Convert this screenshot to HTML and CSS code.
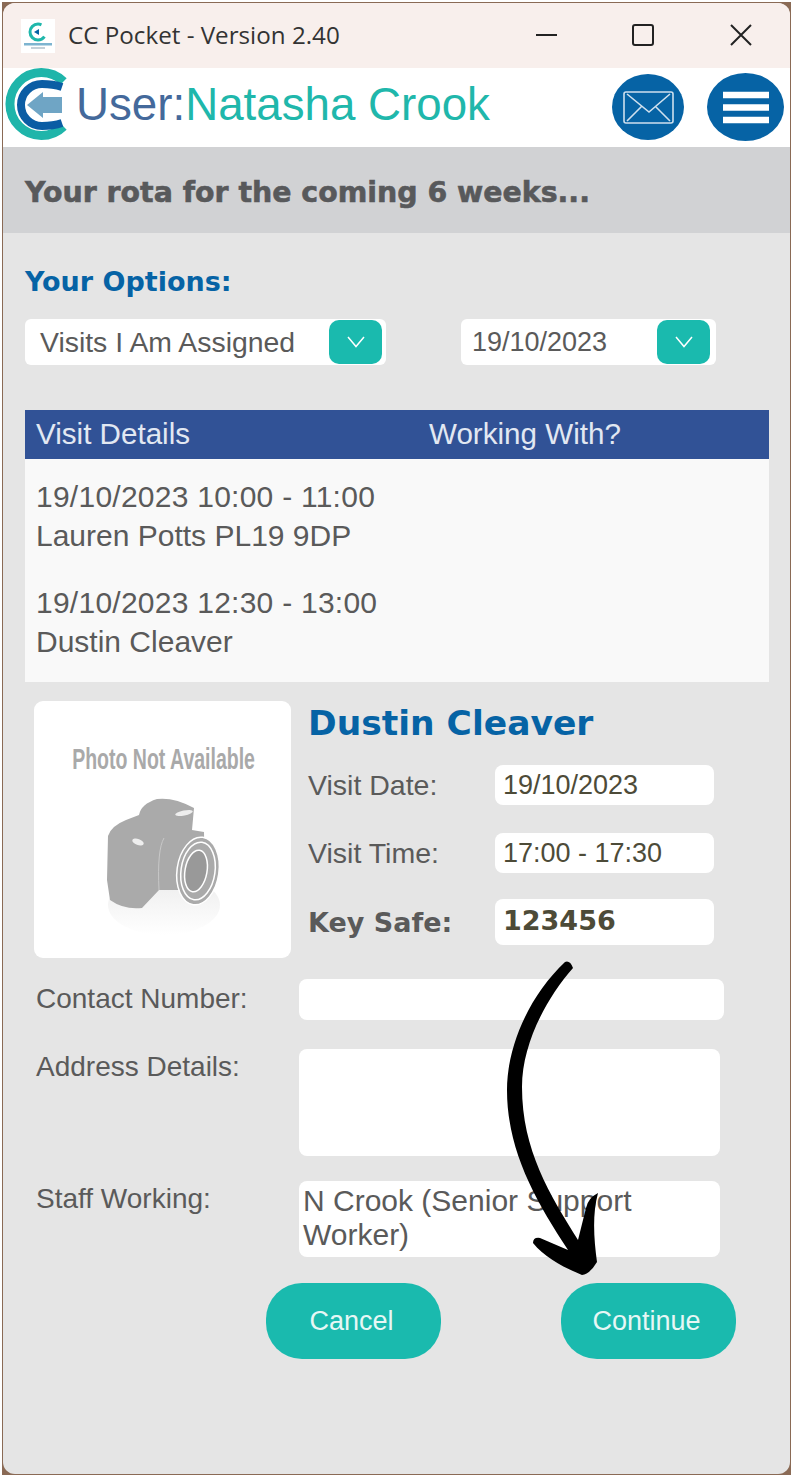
FILE: index.html
```html
<!doctype html>
<html>
<head>
    <meta charset="utf-8">
    <title>CC Pocket</title>
    <link rel="stylesheet" href="styles.css">
</head>
<body>
<div class="frame">
<div class="window">
    <div class="titlebar">
        <svg class="app-icon" width="34" height="34" viewBox="0 0 34 34">
            <rect width="34" height="34" fill="#fff"/>
            <circle cx="17" cy="13" r="8" fill="none" stroke="#20b7ab" stroke-width="3" stroke-dasharray="36 14" stroke-dashoffset="-5"/>
            <path d="M13 13l5-3v6z" fill="#0663a5"/>
            <rect x="3" y="24" width="28" height="2.5" fill="#7db4d0"/>
            <rect x="10" y="28" width="14" height="2" fill="#c4d0d8"/>
        </svg>
        <span class="app-title">CC Pocket - Version 2.40</span>
        <div class="win-controls">
            <svg width="24" height="24" viewBox="0 0 24 24"><path d="M3 12h21" stroke="#222" stroke-width="2"/></svg>
            <svg width="24" height="24" viewBox="0 0 24 24"><rect x="2" y="2" width="20" height="20" rx="2" fill="none" stroke="#222" stroke-width="2"/></svg>
            <svg width="24" height="24" viewBox="0 0 24 24"><path d="M2 2l20 20M22 2L2 22" stroke="#222" stroke-width="2"/></svg>
        </div>
    </div>

    <div class="header">
        <svg class="logo" width="66" height="74" viewBox="0 0 66 74">
            <path d="M58.500 14.500A31.500 31.500 0 1 0 58.500 59.500" fill="none" stroke="#1fb5aa" stroke-width="9"/>
            <path d="M57 20Q48 17 37 17A21 21 0 0 0 37 59Q48 59 57 56" fill="none" stroke="#0b5da4" stroke-width="8"/>
            <path d="M22 38L38 25v5h19v16H38v5z" fill="#6fa5c5"/>
        </svg>
        <div class="user-name"><span class="user-label">User:</span>Natasha Crook</div>
        <svg class="mail-btn" width="72" height="66" viewBox="0 0 72 66">
            <ellipse cx="36" cy="33" rx="36" ry="33" fill="#0663a5"/>
            <rect x="12" y="18" width="49" height="31" rx="2" fill="none" stroke="#cfe0ee" stroke-width="1.6"/>
            <path d="M15 20l22 18 21-18M15 47l15-15M58 47L43 32" fill="none" stroke="#cfe0ee" stroke-width="1.6"/>
        </svg>
        <svg class="menu-btn" width="77" height="68" viewBox="0 0 77 68">
            <ellipse cx="38.5" cy="34" rx="38.5" ry="34" fill="#0663a5"/>
            <path d="M16 22h46M16 34.500h46M16 47h46" stroke="#fff" stroke-width="6.500"/>
        </svg>
    </div>

    <div class="band">Your rota for the coming 6 weeks...</div>

    <div class="content">
        <h2 class="options-title">Your Options:</h2>
        <div class="options">
            <div class="select select-type">
                <span>Visits I Am Assigned</span>
                <div class="select-btn"><svg width="18" height="12" viewBox="0 0 18 12"><path d="M1 1l8 9.500L17 1" fill="none" stroke="#fff" stroke-width="1.500"/></svg></div>
            </div>
            <div class="select select-date">
                <span>19/10/2023</span>
                <div class="select-btn"><svg width="18" height="12" viewBox="0 0 18 12"><path d="M1 1l8 9.500L17 1" fill="none" stroke="#fff" stroke-width="1.500"/></svg></div>
            </div>
        </div>

        <div class="table-head">
            <div class="col-details">Visit Details</div>
            <div>Working With?</div>
        </div>
        <div class="table-body">
            <div class="visit"><span class="visit-time">19/10/2023 10:00 - 11:00</span><br>Lauren Potts PL19 9DP</div>
            <div class="visit"><span class="visit-time">19/10/2023 12:30 - 13:00</span><br>Dustin Cleaver</div>
        </div>

        <div class="detail">
            <div class="photo">
                <div class="photo-text">Photo Not Available</div>
                <svg class="camera" width="130" height="150" viewBox="100 790 130 150">
                    <defs>
                        <linearGradient id="shine" x1="0" y1="0" x2="0" y2="1">
                            <stop offset="0" stop-color="#ececec"/>
                            <stop offset="1" stop-color="#fff"/>
                        </linearGradient>
                    </defs>
                    <ellipse cx="165" cy="905" rx="56" ry="30" fill="url(#shine)"/>
                    <path d="M109 836Q112 826 127 820L140 815Q142 804 158 799Q175 797 195 808L193 830L205 832L206 890L160 890L143 908Q125 910 111 900L108 880Z" fill="#aaa"/>
                    <ellipse cx="199" cy="871" rx="21" ry="34" transform="rotate(8 199 871)" fill="#aaa" stroke="#fff" stroke-width="1.500"/>
                    <ellipse cx="199" cy="871" rx="17" ry="29" transform="rotate(8 199 871)" fill="none" stroke="#fff" stroke-width="1.500"/>
                    <ellipse cx="197" cy="871" rx="11" ry="21" transform="rotate(10 197 871)" fill="#999" stroke="#fff" stroke-width="1.500"/>
                    <ellipse cx="185" cy="813" rx="9" ry="2.500" transform="rotate(-12 185 813)" fill="#eee"/>
                    <ellipse cx="139" cy="842" rx="6" ry="3" transform="rotate(20 139 842)" fill="#eee"/>
                    <path d="M165 838Q158 850 160 890" fill="none" stroke="#c8c8c8" stroke-width="1"/>
                </svg>
            </div>
            <div class="summary">
                <h2 class="client-name">Dustin Cleaver</h2>
                <div class="summary-row row-date">
                    <div class="summary-label">Visit Date:</div>
                    <div class="field field-short">19/10/2023</div>
                </div>
                <div class="summary-row row-time">
                    <div class="summary-label">Visit Time:</div>
                    <div class="field field-short">17:00 - 17:30</div>
                </div>
                <div class="summary-row row-key">
                    <div class="summary-label key-label">Key Safe:</div>
                    <div class="field field-key">123456</div>
                </div>
            </div>
        </div>

        <div class="form-row row-contact">
            <div class="form-label">Contact Number:</div>
            <div class="field field-contact"></div>
        </div>
        <div class="form-row row-address">
            <div class="form-label">Address Details:</div>
            <div class="field field-address"></div>
        </div>
        <div class="form-row row-staff">
            <div class="form-label">Staff Working:</div>
            <div class="field field-staff">N Crook (Senior Support Worker)</div>
        </div>

        <div class="buttons">
            <div class="btn">Cancel</div>
            <div class="btn">Continue</div>
        </div>
    </div>

    <svg class="arrow" width="110" height="330" viewBox="500 955 110 330">
        <path d="M565 962C530 995 507 1045 507 1090C507 1150 535 1200 568 1250L540 1238Q533 1237 533 1243C545 1258 565 1268 582 1275Q590 1274 597 1262C594 1240 592 1215 598 1193Q588 1198 586 1208L578 1240C550 1195 522 1150 522 1087C522 1045 545 1000 573 968Q570 960 565 962Z" fill="#000"/>
    </svg>
</div>
</div>
</body>
</html>
```

FILE: styles.css
```css
* {
    box-sizing: border-box;
}
html, body {
    margin: 0;
    height: 100%;
}
body {
    background: #fff;
    padding: 2px;
    font: 27px "Liberation Sans", Arial, sans-serif;
    color: #5a5a5a;
}
.frame {
    background: #8a6a55;
    padding: 1px;
}
.window {
    position: relative;
    height: 1471px;
    background: #e5e5e5;
    border-radius: 12px;
    overflow: hidden;
}
.titlebar {
    height: 65px;
    background: #f8efec;
    display: flex;
    align-items: center;
    padding-left: 18px;
}
.app-title {
    font: 24.2px "Open Sans", sans-serif;
    color: #333;
    margin-left: 13px;
    padding-bottom: 2px;
}
.win-controls {
    margin-left: auto;
    margin-top: -2px;
    display: flex;
    gap: 74px;
    padding-right: 37px;
}
.header {
    height: 79px;
    background: #fff;
    display: flex;
    align-items: center;
    padding-left: 2px;
}
.logo {
    flex: none;
    margin-top: -7px;
}
.user-name {
    font-size: 45.7px;
    color: #20b7ab;
    margin-left: 5px;
    margin-top: -6px;
}
.user-label {
    color: #44699b;
}
.mail-btn {
    margin-left: auto;
    margin-top: -1px;
}
.menu-btn {
    margin-left: 23px;
    margin-right: 6px;
    margin-top: -1px;
}
.band {
    height: 86px;
    background: #d1d2d4;
    padding: 28px 0 0 22px;
    font: bold 28.4px/36px "DejaVu Sans", sans-serif;
    -webkit-text-stroke: .6px #58595b;
    color: #58595b;
}
.content {
    padding: 32px 21px 0 22px;
}
.options-title {
    margin: 0;
    font: bold 27px/34px "DejaVu Sans", sans-serif;
    color: #0663a5;
}
.options {
    display: flex;
    margin-top: 20px;
    gap: 75px;
}
.select {
    height: 46px;
    background: #fff;
    border-radius: 6px;
    display: flex;
    align-items: center;
    justify-content: space-between;
    padding-right: 4px;
}
.select-type {
    width: 361px;
    padding-left: 15px;
    font-size: 28.4px;
}
.select-date {
    width: 255px;
    padding-left: 11px;
    padding-right: 6px;
}
.select-btn {
    width: 53px;
    height: 44px;
    background: #1abaae;
    border-radius: 10px;
    display: flex;
    align-items: center;
    justify-content: center;
}
.table-head {
    display: flex;
    height: 49px;
    margin-top: 45px;
    background: #315296;
    color: #e2e8f2;
    font-size: 29.6px;
    line-height: 48px;
    padding-left: 11px;
}
.col-details {
    width: 393px;
}
.table-body {
    height: 223px;
    background: #f9f9f9;
    padding: 18px 0 0 11px;
    font-size: 30px;
    line-height: 39px;
}
.visit + .visit {
    margin-top: 28px;
}
.visit-time {
    letter-spacing: .25px;
}
.detail {
    display: flex;
    margin: 19px 0 0 9px;
    gap: 17px;
}
.photo {
    width: 257px;
    height: 257px;
    background: #fff;
    border-radius: 9px;
    display: flex;
    flex-direction: column;
    align-items: center;
    flex: none;
}
.photo-text {
    margin-top: 41px;
    margin-left: 2px;
    font-weight: bold;
    font-size: 30px;
    line-height: 34px;
    color: #a9a9a9;
    white-space: nowrap;
    transform: scaleX(.65);
}
.camera {
    margin-top: 14px;
    margin-left: 2px;
}
.client-name {
    margin: 0;
    font: bold 34.500px/44px "DejaVu Sans", sans-serif;
    color: #0663a5;
}
.summary-row {
    display: flex;
    align-items: center;
}
.row-date {
    margin-top: 20px;
}
.row-time {
    margin-top: 28px;
}
.row-key {
    margin-top: 26px;
}
.summary-label {
    width: 187px;
    font-size: 28.500px;
}
.key-label {
    font: bold 27px "DejaVu Sans", sans-serif;
}
.field {
    background: #fff;
    border-radius: 8px;
    color: #4d4b38;
}
.field-short {
    width: 219px;
    height: 40px;
    line-height: 40px;
    padding-left: 8px;
}
.field-key {
    width: 219px;
    height: 46px;
    padding-left: 8px;
    font: bold 27px/44px "DejaVu Sans", sans-serif;
}
.form-row {
    display: flex;
    padding-left: 11px;
}
.form-label {
    width: 263px;
    font-size: 28px;
    line-height: 36px;
    flex: none;
}
.row-contact {
    margin-top: 21px;
}
.row-contact .form-label {
    line-height: 40px;
}
.row-address {
    margin-top: 29px;
}
.row-staff {
    margin-top: 25px;
}
.field-contact {
    width: 425px;
    height: 41px;
}
.field-address {
    width: 421px;
    height: 107px;
}
.field-staff {
    width: 421px;
    height: 76px;
    padding: 3px 4px;
    font-size: 30px;
    line-height: 34px;
    color: #5a5a5a;
}
.buttons {
    display: flex;
    margin: 26px 0 0 241px;
    gap: 120px;
}
.btn {
    width: 175px;
    height: 76px;
    background: #1abaae;
    border-radius: 36px;
    color: #e6f7f5;
    text-align: center;
    line-height: 76px;
    padding-right: 4px;
}
.arrow {
    position: absolute;
    left: 497px;
    top: 952px;
}
```
